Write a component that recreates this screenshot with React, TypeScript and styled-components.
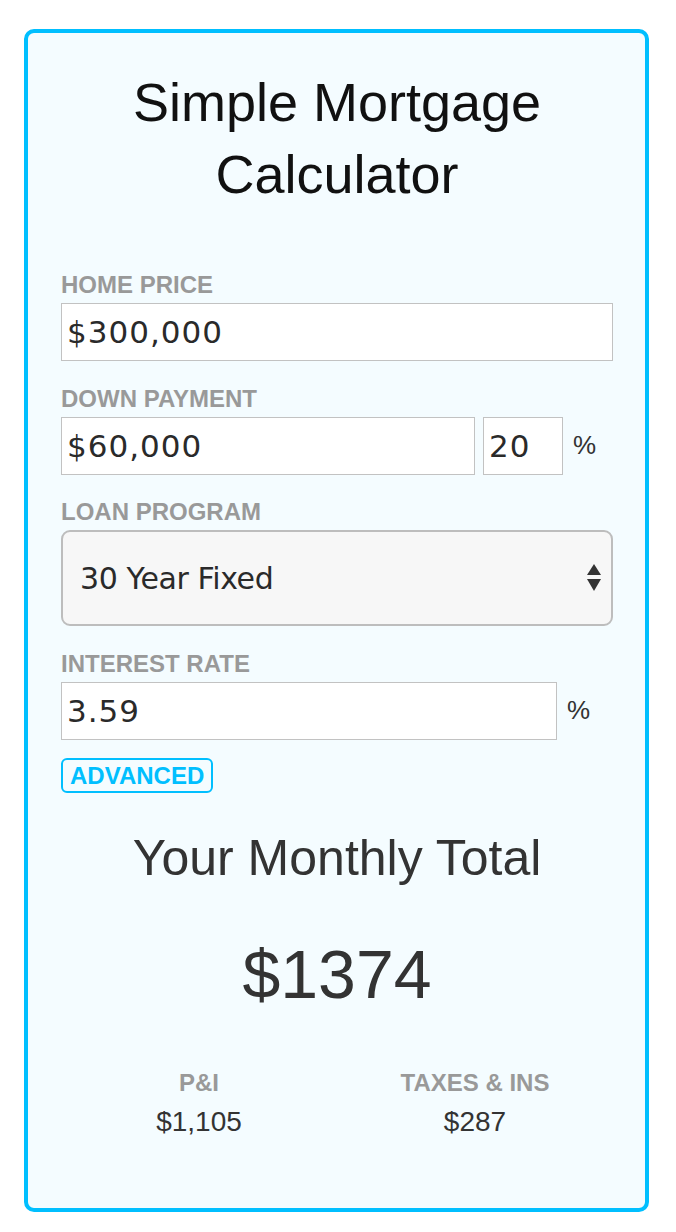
import React from "react";
import styled, { createGlobalStyle } from "styled-components";

const GlobalStyle = createGlobalStyle`
  body {
    margin: 0;
    background: #ffffff;
    font-family: "Liberation Sans", Arial, sans-serif;
  }
`;

const Card = styled.div`
  box-sizing: border-box;
  width: 625px;
  height: 1183px;
  margin: 29px 0 0 24px;
  border: 4px solid #00bfff;
  border-radius: 10px;
  background: #f4fcff;
  padding: 33px 32px 0 33px;
`;

const Title = styled.h1`
  margin: 0 0 61px;
  font-family: "Liberation Sans", Arial, sans-serif;
  font-weight: normal;
  font-size: 54px;
  line-height: 72px;
  color: #111;
  text-align: center;
`;

const Field = styled.div`
  margin-bottom: 23.5px;
`;

const Label = styled.div`
  font-family: "Liberation Sans", Arial, sans-serif;
  font-weight: bold;
  font-size: 24px;
  line-height: 28px;
  color: #999;
  margin-bottom: 4px;
`;

const Row = styled.div`
  display: flex;
  align-items: center;
`;

const TextInput = styled.input<{ $w?: number }>`
  box-sizing: border-box;
  height: 58px;
  ${(p) => (p.$w ? `width: ${p.$w}px; flex: none;` : "flex: 1; width: 100%;")}
  min-width: 0;
  margin: 0;
  padding: 0 0 0 5px;
  border: 1px solid #c2c2c2;
  border-radius: 0;
  background: #fff;
  font-family: "DejaVu Sans", sans-serif;
  font-size: 31px;
  letter-spacing: 1px;
  color: #2a2a2a;
  outline: none;
`;

const Gap = styled.div`
  width: 8px;
  flex: none;
`;

const Pct = styled.span<{ $w: number }>`
  width: ${(p) => p.$w}px;
  flex: none;
  padding-left: 10px;
  box-sizing: border-box;
  font-family: "Liberation Sans", Arial, sans-serif;
  font-size: 26px;
  color: #333;
`;

const SelectBox = styled.div`
  box-sizing: border-box;
  height: 96px;
  display: flex;
  align-items: center;
  justify-content: space-between;
  padding: 0 10px 0 17px;
  border: 2px solid #bdbdbd;
  border-radius: 9px;
  background: #f7f7f7;
  font-family: "DejaVu Sans", sans-serif;
  font-size: 30px;
  letter-spacing: -0.4px;
  color: #2a2a2a;
`;

const AdvancedButton = styled.button`
  box-sizing: border-box;
  margin-top: -5px;
  height: 35px;
  padding: 0 7px;
  border: 2px solid #00bfff;
  border-radius: 6px;
  background: transparent;
  font-family: "Liberation Sans", Arial, sans-serif;
  font-weight: bold;
  font-size: 24px;
  line-height: 31px;
  color: #00bfff;
  cursor: pointer;
`;

const TotalHeading = styled.h2`
  margin: 37px 0 0;
  font-family: "Liberation Sans", Arial, sans-serif;
  font-weight: normal;
  font-size: 50px;
  line-height: 56px;
  color: #333;
  text-align: center;
`;

const TotalAmount = styled.div`
  margin-top: 49px;
  font-family: "Liberation Sans", Arial, sans-serif;
  font-size: 68px;
  line-height: 78px;
  color: #333;
  text-align: center;
`;

const Breakdown = styled.div`
  display: grid;
  grid-template-columns: 1fr 1fr;
  margin-top: 56px;
`;

const BreakItem = styled.div`
  display: flex;
  flex-direction: column;
  align-items: center;
  gap: 8px;
`;

const BreakLabel = styled.div`
  font-family: "Liberation Sans", Arial, sans-serif;
  font-weight: bold;
  font-size: 24px;
  line-height: 28px;
  color: #999;
`;

const BreakValue = styled.div`
  font-family: "Liberation Sans", Arial, sans-serif;
  font-size: 28px;
  line-height: 34px;
  color: #333;
`;

const SortArrows = () => (
  <svg width="14" height="28" viewBox="0 0 14 28">
    <polygon points="7,0 14,11 0,11" fill="#333" />
    <polygon points="0,15 14,15 7,27" fill="#333" />
  </svg>
);

const App = () => {
  return (
    <>
      <GlobalStyle />
      <Card>
        <Title>
          Simple Mortgage
          <br />
          Calculator
        </Title>

        <Field>
          <Label>HOME PRICE</Label>
          <Row>
            <TextInput defaultValue="$300,000" />
          </Row>
        </Field>

        <Field>
          <Label>DOWN PAYMENT</Label>
          <Row>
            <TextInput defaultValue="$60,000" />
            <Gap />
            <TextInput $w={80} defaultValue="20" />
            <Pct $w={50}>%</Pct>
          </Row>
        </Field>

        <Field>
          <Label>LOAN PROGRAM</Label>
          <SelectBox role="listbox">
            <span>30 Year Fixed</span>
            <SortArrows />
          </SelectBox>
        </Field>

        <Field>
          <Label>INTEREST RATE</Label>
          <Row>
            <TextInput defaultValue="3.59" />
            <Pct $w={56}>%</Pct>
          </Row>
        </Field>

        <AdvancedButton>ADVANCED</AdvancedButton>

        <TotalHeading>Your Monthly Total</TotalHeading>
        <TotalAmount>$1374</TotalAmount>

        <Breakdown>
          <BreakItem>
            <BreakLabel>P&amp;I</BreakLabel>
            <BreakValue>$1,105</BreakValue>
          </BreakItem>
          <BreakItem>
            <BreakLabel>TAXES &amp; INS</BreakLabel>
            <BreakValue>$287</BreakValue>
          </BreakItem>
        </Breakdown>
      </Card>
    </>
  );
};

export default App;
